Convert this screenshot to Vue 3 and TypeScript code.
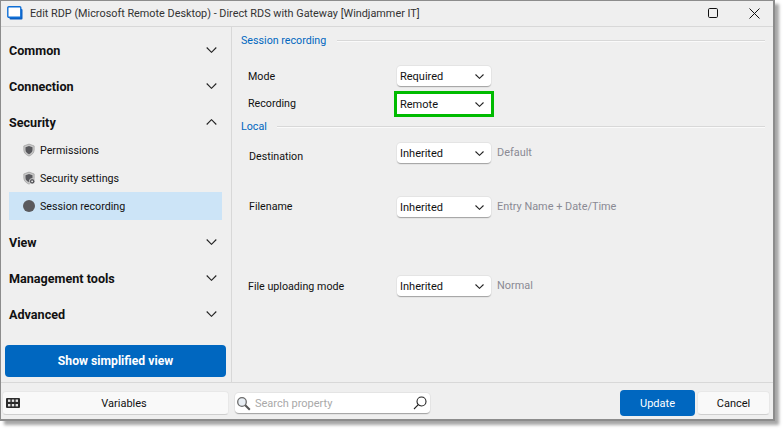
<script setup lang="ts">
interface Item { name: string; icon: string; active?: boolean }
interface Section { name: string; open?: boolean; items?: Item[] }
const sections: Section[] = [
  { name: 'Common' },
  { name: 'Connection' },
  {
    name: 'Security',
    open: true,
    items: [
      { name: 'Permissions', icon: 'shield' },
      { name: 'Security settings', icon: 'gear' },
      { name: 'Session recording', icon: 'dot', active: true },
    ],
  },
  { name: 'View' },
  { name: 'Management tools' },
  { name: 'Advanced' },
]
</script>

<template>
  <div class="stage">
    <div class="window">
      <header class="titlebar">
        <svg class="appicon" width="16" height="16" viewBox="0 0 16 16">
          <rect x="2.5" y="4" width="13" height="10.5" rx="1" fill="#0a5fc4" />
          <rect x="0.8" y="1.8" width="13" height="10.5" rx="1" fill="#fff" stroke="#0f6fd6" stroke-width="1.4" />
        </svg>
        <span class="title">Edit RDP (Microsoft Remote Desktop) - Direct RDS with Gateway [Windjammer IT]</span>
        <svg class="winbtn max" width="10" height="10" viewBox="0 0 10 10">
          <rect x="0.5" y="0.5" width="9" height="9" rx="1.2" fill="none" stroke="#111" />
        </svg>
        <svg class="winbtn close" width="11" height="11" viewBox="0 0 11 11">
          <path d="M0.5 0.5 10.5 10.5M10.5 0.5 0.5 10.5" stroke="#111" stroke-width="1" fill="none" />
        </svg>
      </header>

      <div class="body">
        <aside class="sidebar">
          <div class="accordion">
            <template v-for="s in sections" :key="s.name">
              <div class="section">
                <span>{{ s.name }}</span>
                <svg class="chev" width="11" height="6" viewBox="0 0 11 6">
                  <path :d="s.open ? 'M.7 5.500 5.500.7 10.300 5.500' : 'M.7.5 5.500 5.300 10.300.5'" fill="none" stroke="#222" stroke-width="1.1" />
                </svg>
              </div>
              <div v-if="s.items" class="items">
                <div
                  v-for="item in s.items"
                  :key="item.name"
                  class="item"
                  :class="{ active: item.active }"
                >
                  <svg v-if="item.icon === 'dot'" width="12" height="12" viewBox="0 0 12 12">
                    <circle cx="6" cy="6" r="6" fill="#5a5a5e" />
                  </svg>
                  <svg v-else width="12" height="14" viewBox="0.5 0 13 14">
                    <path d="M7 .6 12.6 2.6V7C12.6 10.2 10 12.4 7 13.6 4 12.4 1.4 10.2 1.4 7V2.6Z" fill="#c9c9c9" stroke="#8a8a8a" stroke-width=".6" />
                    <path d="M7 2.6 10.8 4V7C10.8 9.2 9 10.8 7 11.6 5 10.8 3.2 9.2 3.2 7V4Z" fill="#58585c" />
                    <template v-if="item.icon === 'gear'">
                      <circle cx="10.4" cy="10.6" r="3" fill="#58585c" stroke="#efefef" stroke-width=".8" />
                      <circle cx="10.4" cy="10.6" r="1" fill="#efefef" />
                    </template>
                  </svg>
                  <span>{{ item.name }}</span>
                </div>
              </div>
            </template>
          </div>
          <button class="simplified">Show simplified view</button>
        </aside>

        <main class="content">
          <div class="group first">
            <span>Session recording</span><i></i>
          </div>
          <div class="row mode">
            <label>Mode</label>
            <div class="combo"><span>Required</span><svg width="9" height="5" viewBox="0 0 9 5"><path d="M.5.5 4.500 4.300 8.500.5" fill="none" stroke="#222" stroke-width="1.1" /></svg></div>
          </div>
          <div class="row recording">
            <label>Recording</label>
            <div class="highlight">
              <div class="combo flat"><span>Remote</span><svg width="9" height="5" viewBox="0 0 9 5"><path d="M.5.5 4.500 4.300 8.500.5" fill="none" stroke="#222" stroke-width="1.1" /></svg></div>
            </div>
          </div>
          <div class="group local">
            <span>Local</span><i></i>
          </div>
          <div class="row destination nudge">
            <label>Destination</label>
            <div class="combo"><span>Inherited</span><svg width="9" height="5" viewBox="0 0 9 5"><path d="M.5.5 4.500 4.300 8.500.5" fill="none" stroke="#222" stroke-width="1.1" /></svg></div>
            <em>Default</em>
          </div>
          <div class="row filename nudge">
            <label>Filename</label>
            <div class="combo"><span>Inherited</span><svg width="9" height="5" viewBox="0 0 9 5"><path d="M.5.5 4.500 4.300 8.500.5" fill="none" stroke="#222" stroke-width="1.1" /></svg></div>
            <em>Entry Name + Date/Time</em>
          </div>
          <div class="row upload">
            <label>File uploading mode</label>
            <div class="combo"><span>Inherited</span><svg width="9" height="5" viewBox="0 0 9 5"><path d="M.5.5 4.500 4.300 8.500.5" fill="none" stroke="#222" stroke-width="1.1" /></svg></div>
            <em>Normal</em>
          </div>
        </main>
      </div>

      <footer class="footer">
        <button class="variables">
          <svg width="14" height="10" viewBox="0 0 14 10">
            <rect width="14" height="10" rx="1" fill="#2b2b2b" />
            <g fill="#e4e4e4">
              <rect x="2" y="1.5" width="2.4" height="2.4" /><rect x="5.8" y="1.5" width="2.4" height="2.4" /><rect x="9.6" y="1.5" width="2.4" height="2.4" />
              <rect x="2" y="6" width="2.4" height="2.4" /><rect x="5.8" y="6" width="2.4" height="2.4" /><rect x="9.6" y="6" width="2.4" height="2.4" />
            </g>
          </svg>
          <span>Variables</span>
        </button>
        <div class="search">
          <svg width="15" height="15" viewBox="0 0 15 15">
            <circle cx="6" cy="6" r="4.3" fill="#e8eef4" stroke="#6c6c6c" stroke-width="1.3" />
            <path d="M9.3 9.3 13.800 13.800" stroke="#555" stroke-width="2" />
          </svg>
          <span class="placeholder">Search property</span>
          <svg class="lens" width="14" height="14" viewBox="0 0 14 14">
            <circle cx="8.5" cy="5.5" r="4.5" fill="none" stroke="#222" stroke-width="1.1" />
            <path d="M5.3 8.7 1 13" stroke="#222" stroke-width="1.1" />
          </svg>
        </div>
        <button class="update">Update</button>
        <button class="cancel">Cancel</button>
      </footer>
    </div>
  </div>
</template>

<style>
html, body { margin: 0; background: #fff; }
</style>

<style scoped>
.stage {
  width: 784px;
  height: 430px;
  overflow: hidden;
  background: #fff;
  font-family: Roboto, "Liberation Sans", sans-serif;
  font-size: 11px;
  color: #111;
}
.window {
  width: 775px;
  height: 421px;
  box-sizing: border-box;
  background: #efefef;
  border: 1px solid #8c8c8c;
  border-width: 1px 2px 2px 1px;
  box-shadow: 4px 4px 3px rgba(0, 0, 0, .35);
  display: flex;
  flex-direction: column;
}
.titlebar {
  height: 26px;
  flex: none;
  box-sizing: border-box;
  display: flex;
  align-items: center;
  border-bottom: 1px solid #d8d8d8;
  padding: 0 0 1px 6px;
}
.appicon { flex: none; }
.title { margin-left: 7px; flex: 1; color: #333; white-space: nowrap; font-size: 10.85px; }
.winbtn { flex: none; }
.max { margin-right: 31px; }
.close { margin-right: 13px; }
.body { flex: 1; display: flex; min-height: 0; }
.sidebar {
  width: 231px;
  flex: none;
  box-sizing: border-box;
  border-right: 1px solid #d8d8d8;
  display: flex;
  flex-direction: column;
  padding: 5px 0 5px;
}
.accordion { flex: 1; }
.section {
  height: 36px;
  display: flex;
  align-items: center;
  justify-content: space-between;
  padding: 0 14px 0 8px;
  font-weight: 700;
  font-size: 12.6px;
}
.chev { flex: none; }
.items { margin: -4px 0 4px; }
.item {
  height: 28px;
  margin: 0 9px 0 8px;
  padding-left: 14px;
  display: flex;
  align-items: center;
  gap: 5px;
  font-size: 10.7px;
}
.item svg { flex: none; }
.item.active { background: #cce4f7; }
.simplified {
  height: 32px;
  margin: 0 5px 0 4px;
  border: 0;
  border-radius: 4px;
  background: #0067c0;
  color: #fff;
  font: 700 12.2px Roboto, "Liberation Sans", sans-serif;
}
.content { flex: 1; padding: 0 8px 0 9px; min-width: 0; }
.group {
  display: flex;
  align-items: center;
  gap: 11px;
  color: #0067c0;
  height: 16px;
  font-size: 10.7px;
}
.group i { flex: 1; height: 1px; background: #d8d8d8; box-shadow: 0 1px 0 #fafafa; }
.group.first { margin-top: 5px; }
.row {
  display: flex;
  align-items: center;
  padding-left: 7px;
  font-size: 10.7px;
}
.row label { width: 149px; flex: none; }
.row em { margin-left: 6px; margin-top: -3px; color: #8a8a94; font-style: normal; font-size: 10.9px; }
.combo {
  width: 94px;
  height: 21px;
  box-sizing: border-box;
  background: #fff;
  border-radius: 4px;
  border-bottom: 1px solid #a8a8a8;
  box-shadow: 0 0 0 1px #e4e4e4;
  display: flex;
  align-items: center;
  justify-content: space-between;
  padding: 0 7px 0 3px;
  flex: none;
  font-size: 11px;
}
.combo.flat { border-radius: 0; border: 0; box-shadow: none; height: 20px; }
.highlight { border: 3px solid #00bb00; margin-left: -3px; flex: none; width: 94px; background: #fff; }
.mode { margin-top: 18px; height: 21px; }
.recording { margin-top: 4px; height: 26px; }
.recording label { margin-top: -2px; }
.local { margin-top: 1px; gap: 10px; }
.nudge { padding-left: 8px; }
.nudge label { width: 148px; }
.destination { margin-top: 9px; height: 21px; }
.destination label { margin-top: 6px; }
.filename { margin-top: 33px; height: 21px; }
.filename label { margin-top: -2px; }
.upload { margin-top: 58px; height: 21px; }
.footer {
  height: 37px;
  flex: none;
  box-sizing: border-box;
  border-top: 1px solid #d8d8d8;
  display: flex;
  align-items: center;
  padding: 4px 2px 0 1px;
  font-size: 11px;
}
.footer button { font: inherit; cursor: default; }
.variables {
  width: 227px;
  height: 24px;
  background: #f9f9f9;
  border: 1px solid #e8e8e8;
  border-bottom-color: #cfcfcf;
  border-radius: 4px;
  display: flex;
  align-items: center;
  padding: 0 0 0 3px;
  color: #111;
}
.variables span { flex: 1; text-align: center; }
.search {
  margin: 1px 0 0 6px;
  width: 195px;
  height: 21px;
  box-sizing: border-box;
  background: #fff;
  border-radius: 4px;
  border-bottom: 1px solid #a8a8a8;
  box-shadow: 0 0 0 1px #e4e4e4;
  display: flex;
  align-items: center;
  padding: 0 3px 0 1px;
}
.placeholder { margin-left: 4px; flex: 1; color: #a9a9a9; }
.update {
  margin-left: 190px;
  width: 75px;
  height: 26px;
  border: 0;
  border-radius: 4px;
  background: #0067c0;
  color: #fff;
}
.cancel {
  margin-left: 2px;
  width: 73px;
  height: 24px;
  background: #f9f9f9;
  border: 1px solid #e8e8e8;
  border-bottom-color: #cfcfcf;
  border-radius: 4px;
  color: #111;
}
</style>
